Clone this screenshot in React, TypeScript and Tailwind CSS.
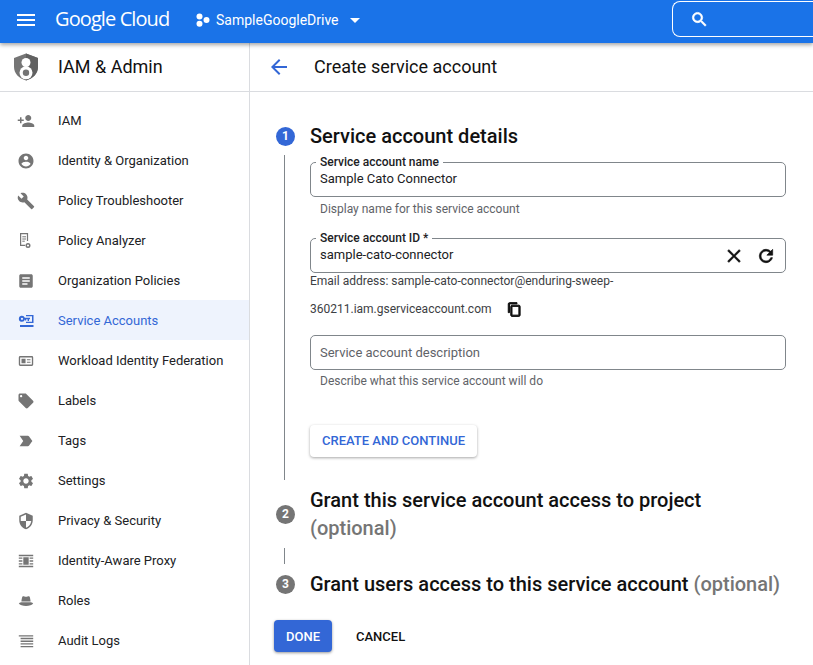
import React from 'react';

function Icon({ d, className, size = 18 }: { d: string; className?: string; size?: number }) {
  return (
    <svg viewBox="0 0 24 24" width={size} height={size} fill="currentColor" className={className}>
      <path d={d} />
    </svg>
  );
}

const paths = {
  personAdd: 'M15 12c2.21 0 4-1.79 4-4s-1.79-4-4-4-4 1.79-4 4 1.79 4 4 4zm-9-2V7H4v3H1v2h3v3h2v-3h3v-2H6zm9 4c-2.67 0-8 1.34-8 4v2h16v-2c0-2.66-5.33-4-8-4z',
  account: 'M12 2C6.48 2 2 6.48 2 12s4.48 10 10 10 10-4.48 10-10S17.52 2 12 2zm0 3c1.66 0 3 1.34 3 3s-1.34 3-3 3-3-1.34-3-3 1.34-3 3-3zm0 14.2c-2.5 0-4.71-1.28-6-3.22.03-1.99 4-3.08 6-3.08 1.99 0 5.97 1.09 6 3.08-1.29 1.94-3.5 3.22-6 3.22z',
  build: 'M22.7 19l-9.1-9.1c.9-2.3.4-5-1.5-6.9-2-2-5-2.4-7.4-1.3L9 6 6 9 1.6 4.7C.4 7.1.9 10.1 2.9 12.1c1.9 1.9 4.6 2.4 6.9 1.5l9.1 9.1c.4.4 1 .4 1.4 0l2.3-2.3c.5-.4.5-1.1.1-1.4z',
  article: 'M19 3H5c-1.1 0-2 .9-2 2v14c0 1.1.9 2 2 2h14c1.1 0 2-.9 2-2V5c0-1.1-.9-2-2-2zm-5 14H7v-2h7v2zm3-4H7v-2h10v2zm0-4H7V7h10v2z',
  offer: 'M21.41 11.58l-9-9C12.05 2.22 11.55 2 11 2H4c-1.1 0-2 .9-2 2v7c0 .55.22 1.05.59 1.42l9 9c.36.36.86.58 1.41.58.55 0 1.05-.22 1.41-.59l7-7c.37-.36.59-.86.59-1.41 0-.55-.23-1.06-.59-1.42zM5.5 7C4.67 7 4 6.33 4 5.5S4.67 4 5.5 4 7 4.67 7 5.5 6.33 7 5.5 7z',
  tag: 'M3.5 18.99l11 .01c.67 0 1.27-.33 1.63-.84L20.5 12l-4.37-6.16c-.36-.51-.96-.84-1.63-.84l-11 .01L8.34 12 3.5 18.99z',
  settings: 'M19.14 12.94c.04-.3.06-.61.06-.94 0-.32-.02-.64-.07-.94l2.03-1.58c.18-.14.23-.41.12-.61l-1.92-3.32c-.12-.22-.37-.29-.59-.22l-2.39.96c-.5-.38-1.03-.7-1.62-.94l-.36-2.54c-.04-.24-.24-.41-.48-.41h-3.84c-.24 0-.43.17-.47.41l-.36 2.54c-.59.24-1.13.57-1.62.94l-2.39-.96c-.22-.08-.47 0-.59.22L2.74 8.87c-.12.21-.08.47.12.61l2.03 1.58c-.05.3-.09.63-.09.94s.02.64.07.94l-2.03 1.58c-.18.14-.23.41-.12.61l1.92 3.32c.12.22.37.29.59.22l2.39-.96c.5.38 1.03.7 1.62.94l.36 2.54c.05.24.24.41.48.41h3.84c.24 0 .44-.17.47-.41l.36-2.54c.59-.24 1.13-.56 1.62-.94l2.39.96c.22.08.47 0 .59-.22l1.92-3.32c.12-.22.07-.47-.12-.61l-2.01-1.58zM12 15.6c-1.98 0-3.6-1.62-3.6-3.6s1.62-3.6 3.6-3.6 3.6 1.62 3.6 3.6-1.62 3.6-3.6 3.6z',
  security: 'M12 1L3 5v6c0 5.55 3.84 10.74 9 12 5.16-1.26 9-6.45 9-12V5l-9-4zm0 10.99h7c-.53 4.12-3.28 7.79-7 8.94V12H5V6.3l7-3.11v8.8z',
  back: 'M20 11H7.83l5.59-5.59L12 4l-8 8 8 8 1.41-1.41L7.83 13H20v-2z',
  close: 'M19 6.41L17.59 5 12 10.59 6.41 5 5 6.41 10.59 12 5 17.59 6.41 19 12 13.41 17.59 19 19 17.59 13.41 12z',
  refresh: 'M17.65 6.35C16.2 4.9 14.21 4 12 4c-4.42 0-7.99 3.58-7.99 8s3.57 8 7.99 8c3.73 0 6.84-2.55 7.73-6h-2.08c-.82 2.33-3.04 4-5.65 4-3.31 0-6-2.69-6-6s2.69-6 6-6c1.66 0 3.14.69 4.22 1.78L13 11h7V4l-2.35 2.35z',
  copy: 'M16 1H4c-1.1 0-2 .9-2 2v14h2V3h12V1zm3 4H8c-1.1 0-2 .9-2 2v14c0 1.1.9 2 2 2h11c1.1 0 2-.9 2-2V7c0-1.1-.9-2-2-2zm0 16H8V7h11v14z',
  search: 'M15.5 14h-.79l-.28-.27C15.41 12.59 16 11.11 16 9.5 16 5.91 13.09 3 9.5 3S3 5.91 3 9.5 5.91 16 9.5 16c1.61 0 3.09-.59 4.23-1.57l.27.28v.79l5 4.99L20.49 19l-4.99-5zm-6 0C7.01 14 5 11.99 5 9.5S7.01 5 9.5 5 14 7.01 14 9.5 11.99 14 9.5 14z',
  menu: 'M3 18h18v-2H3v2zm0-5h18v-2H3v2zm0-7v2h18V6H3z',
  caret: 'M7 10l5 5 5-5z',
};

function PolicyAnalyzerIcon() {
  return (
    <svg viewBox="0 0 18 18" width={18} height={18} fill="none" stroke="currentColor">
      <path d="M10.500 9V1.600H3.600v11.800h4.500" strokeWidth="1.200" />
      <path d="M5.300 4.800h3.700M5.300 7h3.700M5.300 9.200h2.500" strokeWidth="1" />
      <circle cx="11" cy="13.500" r="1.800" strokeWidth="1.400" />
    </svg>
  );
}

function ServiceAccountIcon() {
  return (
    <svg viewBox="0 0 18 18" width={18} height={18} fill="currentColor">
      <path fillRule="evenodd" d="M5 3.800a3 3 0 0 1 2.800 2h5.200v1.500h-1v1.700h-1.400V7.300H9.200v1.200H7.900V7.300l-.1.100A3 3 0 1 1 5 3.800zm0 1.900a1.100 1.100 0 1 0 0 2.200 1.100 1.100 0 0 0 0-2.200z" />
      <path d="M9 3h7.500v8H9V9.800h6V4.300H9zM3 13h13.500v2H3z" />
    </svg>
  );
}

function CardIcon() {
  return (
    <svg viewBox="-1 -1 20 20" width={18} height={18} fill="currentColor">
      <path fillRule="evenodd" d="M2.500 3.500h13A1.500 1.500 0 0 1 17 5v8a1.500 1.500 0 0 1-1.500 1.500h-13A1.500 1.500 0 0 1 1 13V5a1.500 1.500 0 0 1 1.500-1.500zm0 1.500v8h13V5zM4 6.500h4.500v5H4zM10 7h4v1.300h-4zM10 9.700h4V11h-4z" />
    </svg>
  );
}

function ProxyIcon() {
  return (
    <svg viewBox="-1 -1 20 20" width={18} height={18} fill="currentColor">
      <path d="M1 2h16v1.600H1zM1 14.400h16V16H1zM1 5h4v1.500H1zM13 5h4v1.500h-4zM1 8.200h4v1.500H1zM13 8.200h4v1.500h-4zM1 11.400h4v1.500H1zM13 11.400h4v1.500h-4zM6 4.800h6v8.400H6z" />
    </svg>
  );
}

function HatIcon() {
  return (
    <svg viewBox="-1 -1 20 20" width={18} height={18} fill="currentColor">
      <path d="M5 4.200c.6-.8 1.500-.5 2.300-.2.900.3 2.500.3 3.400 0 .8-.3 1.700-.6 2.300.2.500.7.900 3.200 1.100 5.300H3.900C4.100 7.400 4.500 4.900 5 4.200zM1 11.500c1.500-.9 2.300-1 3-1h10c.7 0 1.500.1 3 1-1 1.900-4.400 3-8 3s-7-1.100-8-3z" />
    </svg>
  );
}

function LinesIcon() {
  return (
    <svg viewBox="-1 -1 20 20" width={18} height={18} fill="currentColor">
      <path d="M1 2.500h16V4H1zM3 5.500h14V7H3zM3 8.500h14V10H3zM3 11.500h14V13H3zM3 14.500h14V16H3z" />
    </svg>
  );
}

const navItems: { label: string; icon: React.ReactNode; active?: boolean }[] = [
  { label: 'IAM', icon: <Icon d={paths.personAdd} /> },
  { label: 'Identity & Organization', icon: <Icon d={paths.account} /> },
  { label: 'Policy Troubleshooter', icon: <Icon d={paths.build} /> },
  { label: 'Policy Analyzer', icon: <PolicyAnalyzerIcon /> },
  { label: 'Organization Policies', icon: <Icon d={paths.article} /> },
  { label: 'Service Accounts', icon: <ServiceAccountIcon />, active: true },
  { label: 'Workload Identity Federation', icon: <CardIcon /> },
  { label: 'Labels', icon: <Icon d={paths.offer} /> },
  { label: 'Tags', icon: <Icon d={paths.tag} /> },
  { label: 'Settings', icon: <Icon d={paths.settings} /> },
  { label: 'Privacy & Security', icon: <Icon d={paths.security} /> },
  { label: 'Identity-Aware Proxy', icon: <ProxyIcon /> },
  { label: 'Roles', icon: <HatIcon /> },
  { label: 'Audit Logs', icon: <LinesIcon /> },
];

function TopBar() {
  return (
    <header className="relative z-10 h-[43px] shrink-0 bg-[#1a73e8] flex items-center text-white shadow-[0_2px_4px_rgba(0,0,0,0.35)]">
      <Icon d={paths.menu} size={24} className="ml-[14px] -mt-[3px]" />
      <span className="ml-[17px] w-[116px] text-[20px] leading-none tracking-[-0.9px] font-['Open_Sans',sans-serif] whitespace-nowrap -mt-[5px]">
        Google Cloud
      </span>
      <svg viewBox="0 0 14 14" width={14} height={14} fill="currentColor" className="ml-[25px] -mt-[3px]">
        <circle cx="3.500" cy="3.500" r="3" />
        <circle cx="3.500" cy="10.800" r="3" />
        <circle cx="10.500" cy="7" r="3" />
      </svg>
      <span className="ml-[6px] text-[14px] -mt-[3px]">SampleGoogleDrive</span>
      <Icon d={paths.caret} size={24} className="ml-[4px] -mt-[3px]" />
      <div className="ml-auto self-start mt-[1px] w-[141px] h-[36px] border border-white border-r-0 rounded-l-[8px] flex items-center pl-[17px]">
        <Icon d={paths.search} size={19} className="stroke-current stroke-[0.8px]" />
      </div>
    </header>
  );
}

function Sidebar() {
  return (
    <aside className="w-[250px] shrink-0 border-r border-[#dadce0] flex flex-col">
      <div className="h-[49px] shrink-0 border-b border-[#dadce0] flex items-center pl-[14px]">
        <svg viewBox="0 0 24 28" width={24} height={28} className="shrink-0">
          <path d="M12 0.500L0 5v9c0 6.500 5 11.500 12 13.500 7-2 12-7 12-13.500V5z" fill="#757575" />
          <path d="M12 .5L24 5v9c0 6.500-5 11.500-12 13.500z" fill="#616161" />
          <circle cx="12" cy="9.500" r="4.500" fill="#fff" />
          <circle cx="12" cy="19.800" r="6.500" fill="#fff" />
          <circle cx="12" cy="19.800" r="3.200" fill="#757575" />
        </svg>
        <span className="ml-[20px] text-[18px] text-[#111] -mt-[2px]">IAM &amp; Admin</span>
      </div>
      <nav className="pt-[8px]">
        {navItems.map(item => (
          <div
            key={item.label}
            className={
              item.active
                ? 'h-[40px] flex items-center pl-[17px] pt-[2px] bg-[#eef3fd] text-[#3367d6]'
                : 'h-[40px] flex items-center pl-[17px] pt-[2px] text-[#757575]'
            }
          >
            <span className="w-[18px] h-[18px] shrink-0 flex">{item.icon}</span>
            <span className={item.active ? 'ml-[23px] text-[13px]' : 'ml-[23px] text-[13px] text-[#202124]'}>
              {item.label}
            </span>
          </div>
        ))}
      </nav>
    </aside>
  );
}

function StepBadge({ n, active }: { n: number; active?: boolean }) {
  return (
    <span
      className={
        active
          ? 'w-[19px] h-[19px] shrink-0 rounded-full bg-[#3367d6] text-white text-[12px] font-bold flex items-center justify-center'
          : 'w-[19px] h-[19px] shrink-0 rounded-full bg-[#757575] text-white text-[12px] font-bold flex items-center justify-center'
      }
    >
      {n}
    </span>
  );
}

function Field({ label, value, trailing }: { label: string; value: string; trailing?: React.ReactNode }) {
  return (
    <div className="relative h-[35px] border border-[#80868b] rounded-[5px] flex items-center pl-[9px] pr-[9px]">
      <span className="absolute -top-[8px] left-[5px] bg-white px-[4px] text-[12px] leading-[14px] font-medium text-[#202124]">
        {label}
      </span>
      <span className="text-[13px] text-[#202124] mt-[-2px] flex-1">{value}</span>
      {trailing}
    </div>
  );
}

function Hint({ children }: { children: React.ReactNode }) {
  return <p className="pl-[10px] text-[12px] leading-[14px] text-[#5f6368]">{children}</p>;
}

function Main() {
  return (
    <main className="flex-1 min-w-0 flex flex-col">
      <div className="h-[49px] shrink-0 border-b border-[#dadce0] flex items-center pl-[17px]">
        <Icon d={paths.back} size={24} className="text-[#3367d6] -mt-[1px]" />
        <span className="ml-[23px] text-[18px] text-[#111] -mt-[1px]">Create service account</span>
      </div>

      <div className="pl-[26px] pr-[27px] pt-[32px]">
        {/* Step 1 */}
        <div className="flex items-center h-[24px]">
          <StepBadge n={1} active />
          <h2 className="ml-[15px] text-[20px] font-medium text-[#111] whitespace-nowrap">Service account details</h2>
        </div>
        <div className="flex mt-[7px]">
          <div className="w-[1px] h-[325px] bg-[#80868b] ml-[8px] shrink-0" />
          <div className="ml-[25px] flex-1 pt-[7px]">
            <Field label="Service account name" value="Sample Cato Connector" />
            <div className="mt-[5px]"><Hint>Display name for this service account</Hint></div>
            <div className="mt-[22px]">
              <Field
                label="Service account ID *"
                value="sample-cato-connector"
                trailing={
                  <span className="flex items-center gap-[11px] text-[#111]">
                    <Icon d={paths.close} size={22} className="stroke-current stroke-[0.5px]" />
                    <Icon d={paths.refresh} size={20} className="stroke-current stroke-[0.8px]" />
                  </span>
                }
              />
            </div>
            <p className="mt-[1px] text-[12px] leading-[14px] text-[#3c4043]">
              Email address: sample-cato-connector@enduring-sweep-
            </p>
            <div className="mt-[13px] h-[16px] flex items-center text-[12px] text-[#3c4043]">
              360211.iam.gserviceaccount.com
              <Icon d={paths.copy} size={15} className="ml-[15px] text-[#111] stroke-current stroke-[1.6px]" />
            </div>
            <div className="mt-[18px]">
              <div className="h-[35px] border border-[#80868b] rounded-[5px] flex items-center pl-[9px] text-[13px] text-[#5f6368]">
                Service account description
              </div>
            </div>
            <div className="mt-[4px]"><Hint>Describe what this service account will do</Hint></div>
            <button className="mt-[37px] h-[32px] w-[167px] rounded-[4px] bg-white text-[13px] font-medium text-[#3367d6] shadow-[0_1px_3px_rgba(0,0,0,0.35)]">
              CREATE AND CONTINUE
            </button>
          </div>
        </div>

        {/* Step 2 */}
        <div className="flex items-center mt-[6px]">
          <StepBadge n={2} />
          <h2 className="ml-[15px] text-[20px] leading-[28px] font-medium text-[#111]">
            Grant this service account access to project
            <br />
            <span className="text-[#757575]">(optional)</span>
          </h2>
        </div>
        <div className="w-[1px] h-[16px] bg-[#80868b] ml-[8px] mt-[6px]" />

        {/* Step 3 */}
        <div className="flex items-center mt-[6px] h-[28px]">
          <StepBadge n={3} />
          <h2 className="ml-[15px] text-[20px] font-medium text-[#111] whitespace-nowrap">
            Grant users access to this service account <span className="text-[#757575]">(optional)</span>
          </h2>
        </div>

        <div className="flex items-center -ml-[2px] mt-[22px]">
          <button className="h-[32px] w-[58px] pt-[2px] rounded-[4px] bg-[#3367d6] text-white text-[13px] font-medium shadow-[0_1px_3px_rgba(0,0,0,0.4)]">
            DONE
          </button>
          <button className="ml-[24px] h-[32px] pt-[2px] text-[13px] font-medium text-[#111]">CANCEL</button>
        </div>
      </div>
    </main>
  );
}

export default function App() {
  return (
    <div className="h-[665px] w-[813px] overflow-hidden bg-white flex flex-col font-['Roboto',sans-serif]">
      <TopBar />
      <div className="flex flex-1 min-h-0">
        <Sidebar />
        <Main />
      </div>
    </div>
  );
}
